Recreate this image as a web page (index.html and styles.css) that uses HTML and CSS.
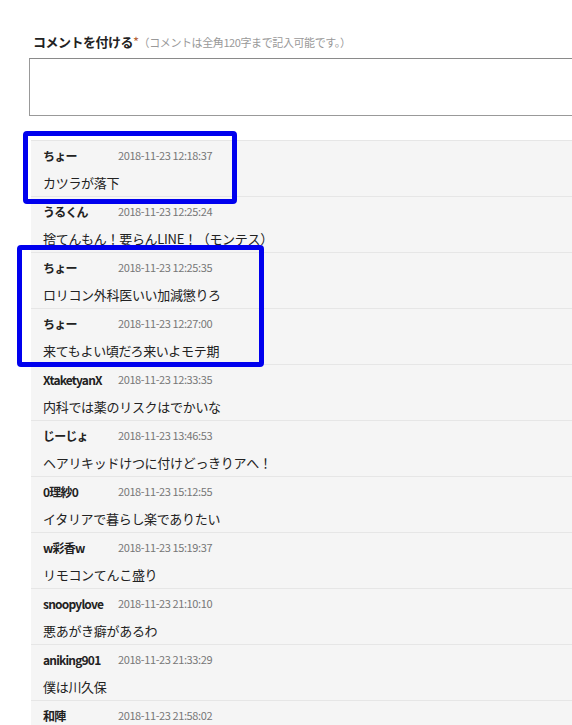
FILE: index.html
```html
<!DOCTYPE html>
<html lang="ja">

<head>
    <meta charset="UTF-8">
    <meta name="viewport" content="width=device-width, initial-scale=1.0">
    <title>コメント</title>
    <link rel="stylesheet" href="styles.css">
</head>

<body>
    <div class="comment-form">
        <label class="form-label">コメントを付ける<span class="required">*</span><span class="note">（コメントは全角120字まで記入可能です。）</span></label>
        <textarea class="comment-input"></textarea>
    </div>

    <div class="comment-area">
        <ul class="comment-list">
            <li><div class="meta"><span class="name">ちょー</span><span class="date">2018-11-23 12:18:37</span></div><p>カツラが落下</p></li>
            <li><div class="meta"><span class="name">うるくん</span><span class="date">2018-11-23 12:25:24</span></div><p>捨てんもん！要らんLINE！（モンテス）</p></li>
            <li><div class="meta"><span class="name">ちょー</span><span class="date">2018-11-23 12:25:35</span></div><p>ロリコン外科医いい加減懲りろ</p></li>
            <li><div class="meta"><span class="name">ちょー</span><span class="date">2018-11-23 12:27:00</span></div><p>来てもよい頃だろ来いよモテ期</p></li>
            <li><div class="meta"><span class="name">XtaketyanX</span><span class="date">2018-11-23 12:33:35</span></div><p>内科では薬のリスクはでかいな</p></li>
            <li><div class="meta"><span class="name">じーじょ</span><span class="date">2018-11-23 13:46:53</span></div><p>ヘアリキッドけつに付けどっきりアへ！</p></li>
            <li><div class="meta"><span class="name">0理紗0</span><span class="date">2018-11-23 15:12:55</span></div><p>イタリアで暮らし楽でありたい</p></li>
            <li><div class="meta"><span class="name">w彩香w</span><span class="date">2018-11-23 15:19:37</span></div><p>リモコンてんこ盛り</p></li>
            <li><div class="meta"><span class="name">snoopylove</span><span class="date">2018-11-23 21:10:10</span></div><p>悪あがき癖があるわ</p></li>
            <li><div class="meta"><span class="name">aniking901</span><span class="date">2018-11-23 21:33:29</span></div><p>僕は川久保</p></li>
            <li><div class="meta"><span class="name">和陣</span><span class="date">2018-11-23 21:58:02</span></div><p>&nbsp;</p></li>
        </ul>

        <!-- highlight boxes -->
        <div class="mark mark-one"></div>
        <div class="mark mark-two"></div>
    </div>
</body>

</html>
```

FILE: styles.css
```css
body {
    font-family: "Noto Sans CJK JP", "Noto Sans", sans-serif;
    margin: 0;
    padding: 0;
    background-color: #fff;
    color: #222;
    overflow: hidden;
}

.comment-form {
    padding: 33px 0 0 30px;
}

.form-label {
    display: block;
    font-size: 13px;
    font-weight: bold;
    line-height: 18px;
    margin: 0 0 7px 3px;
    letter-spacing: -0.5px;
}

.required {
    color: #b5643c;
    font-weight: normal;
}

.note {
    font-size: 11px;
    font-weight: normal;
    color: #999;
    letter-spacing: -0.4px;
}

.comment-input {
    display: block;
    box-sizing: border-box;
    width: calc(100% + 1px);
    height: 58px;
    margin: 0 0 0 -1px;
    border: 1px solid #999;
    border-top-color: #8a8a8a;
    border-right: none;
    resize: none;
}

.comment-area {
    position: relative;
    margin: 24px 0 0 31px;
}

.comment-list {
    list-style: none;
    margin: 0;
    padding: 0;
    background-color: #f5f5f5;
    border-top: 1px solid #e6e6e6;
}

.comment-list li {
    height: 55px;
    border-bottom: 1px solid #e6e6e6;
    padding-left: 12px;
}

.meta {
    display: flex;
    align-items: center;
    height: 28px;
}

.name {
    width: 75px;
    font-size: 12px;
    font-weight: bold;
    color: #222;
    letter-spacing: -0.8px;
    white-space: nowrap;
}

.date {
    font-size: 11px;
    color: #777;
    letter-spacing: -0.4px;
}

.comment-list p {
    margin: 0;
    font-size: 13px;
    line-height: 27px;
    color: #222;
    letter-spacing: -0.3px;
}

/* blue annotation boxes */
.mark {
    position: absolute;
    box-sizing: border-box;
    border: 5px solid #0000ee;
    border-radius: 4px;
}

.mark-one {
    left: -8px;
    top: -9px;
    width: 214px;
    height: 73px;
}

.mark-two {
    left: -14px;
    top: 105px;
    width: 247px;
    height: 122px;
}
```
